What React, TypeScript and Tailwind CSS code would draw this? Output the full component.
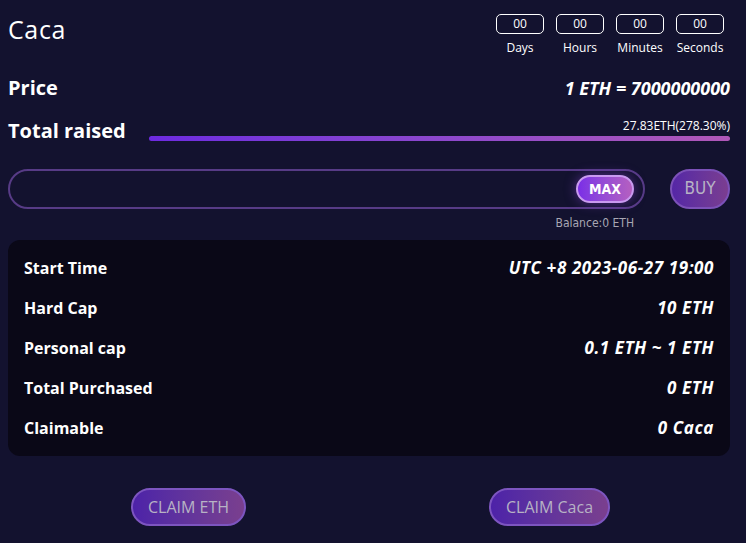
import React from 'react';

const timer = [
  { value: '00', label: 'Days' },
  { value: '00', label: 'Hours' },
  { value: '00', label: 'Minutes' },
  { value: '00', label: 'Seconds' },
];

const rows = [
  { label: 'Start Time', value: 'UTC +8 2023-06-27 19:00' },
  { label: 'Hard Cap', value: '10 ETH' },
  { label: 'Personal cap', value: '0.1 ETH ~ 1 ETH' },
  { label: 'Total Purchased', value: '0 ETH' },
  { label: 'Claimable', value: '0 Caca' },
];

const App: React.FC = () => {
  return (
    <div className="min-h-screen w-full bg-[#13122f] text-white font-['Open_Sans',sans-serif] pl-2 pr-4 pt-[14px]">
      <div className="flex items-start justify-between">
        <h1 className="text-[25px] leading-[32px] tracking-wide mt-[-1px]">Caca</h1>
        <div className="flex gap-3 pr-[6px]">
          {timer.map((t) => (
            <div key={t.label} className="flex flex-col items-center w-12">
              <div className="w-12 h-5 rounded-[5px] border border-white flex items-center justify-center text-[12px] leading-none">{t.value}</div>
              <span className="mt-[6px] text-[12px] leading-4">{t.label}</span>
            </div>
          ))}
        </div>
      </div>

      <div className="flex items-center justify-between mt-[18px] h-7">
        <span className="text-[20px] font-bold">Price</span>
        <span className="text-[18px] font-bold italic">1 ETH = 7000000000</span>
      </div>

      <div className="flex items-end mt-[15px] h-7">
        <span className="text-[20px] font-bold leading-7 whitespace-nowrap">Total raised</span>
        <div className="flex-1 ml-[23px] flex flex-col items-end pb-[4px]">
          <span className="text-[12px] leading-4 mb-[2px]">27.83ETH(278.30%)</span>
          <div className="w-full h-[5px] rounded-full bg-gradient-to-r from-[#6d2ae0] to-[#b057b8]" />
        </div>
      </div>

      <div className="flex items-start mt-[24px]">
        <div className="flex-1 flex flex-col items-end">
          <div className="w-full h-10 rounded-full border-2 border-[#573b86] flex items-center justify-end pr-[9px]">
            <button className="h-[28px] w-[58px] rounded-full border-2 border-[#c99af0] bg-gradient-to-r from-[#7b2de6] to-[#b55fc0] text-[14px] font-semibold font-['DejaVu_Sans_Condensed',sans-serif] shadow-[0_0_12px_rgba(140,70,220,0.5)]">MAX</button>
          </div>
          <span className="mt-[5px] mr-[11px] text-[12px] text-[#a8a6b4] font-['DejaVu_Sans_Condensed',sans-serif]">Balance:0 ETH</span>
        </div>
        <button className="ml-[25px] w-[60px] h-10 rounded-full border-2 border-[#7c51b8] bg-gradient-to-r from-[#5526a6] to-[#7b3d90] text-[#b7b2c4] text-[17px] font-['DejaVu_Sans_Condensed',sans-serif]">BUY</button>
      </div>

      <div className="mt-[8px] rounded-xl bg-[#0a0817] px-4 py-2 flex flex-col">
        {rows.map((r) => (
          <div key={r.label} className="flex items-center justify-between h-10 font-bold">
            <span className="text-[16px]">{r.label}</span>
            <span className="text-[17px] italic tracking-[0.035em]">{r.value}</span>
          </div>
        ))}
      </div>

      <div className="grid grid-cols-2 mt-[32px] pb-4">
        <div className="flex justify-center">
          <button className="h-[38px] px-[15px] rounded-full border-2 border-[#7d55c0] bg-gradient-to-r from-[#4d22a8] to-[#7a3f8e] text-[#b7b2c4] text-[16px]">CLAIM ETH</button>
        </div>
        <div className="flex justify-center">
          <button className="h-[38px] px-[15px] rounded-full border-2 border-[#7d55c0] bg-gradient-to-r from-[#4d22a8] to-[#7a3f8e] text-[#b7b2c4] text-[16px]">CLAIM Caca</button>
        </div>
      </div>
    </div>
  );
};

export default App;
